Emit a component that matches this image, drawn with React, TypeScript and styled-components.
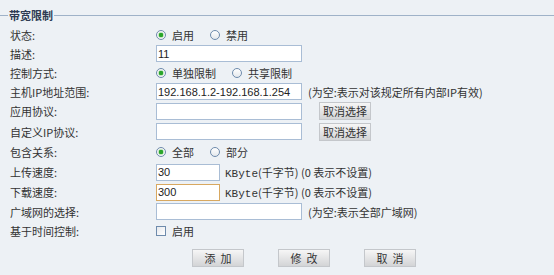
import styled, { createGlobalStyle } from "styled-components";

const GlobalStyle = createGlobalStyle`
  html, body {
    margin: 0;
    padding: 0;
    background: #edf1f5;
  }
  body {
    font-family: "Noto Sans CJK SC", "Liberation Sans", sans-serif;
    font-size: 11px;
    color: #333;
  }
`;

const Panel = styled.div`
  width: 554px;
  height: 275px;
  background: #edf1f5;
  box-sizing: border-box;
  padding-left: 10px;
`;

const Legend = styled.div`
  display: flex;
  align-items: center;
  height: 22px;
  padding-top: 4px;
  margin-left: -10px;

  &::before,
  &::after {
    content: "";
    height: 1px;
    background: #9fb2c8;
  }
  &::before {
    width: 8px;
  }
  &::after {
    flex: 1;
  }
`;

const LegendText = styled.span`
  font-weight: bold;
  color: #2e3b52;
  padding: 0 1px;
`;

const Row = styled.div<{ $h: number }>`
  display: flex;
  align-items: center;
  height: ${(p) => p.$h}px;
`;

const Label = styled.div`
  width: 146px;
  flex-shrink: 0;
`;

const Field = styled.div`
  display: flex;
  align-items: center;
`;

const Input = styled.input<{ $w?: number; $focus?: boolean }>`
  box-sizing: border-box;
  width: ${(p) => p.$w ?? 146}px;
  height: 17px;
  margin: 0;
  padding: 0 1px;
  border: 1px solid ${(p) => (p.$focus ? "#d8a860" : "#a9bdd5")};
  background: #fff;
  font-family: "Liberation Sans", Arial, sans-serif;
  font-size: 11px;
  color: #222;
  outline: none;
`;

const Hint = styled.span<{ $gap: number }>`
  margin-left: ${(p) => p.$gap}px;
  white-space: pre;
`;

const Unit = styled.span`
  font-family: "Liberation Mono", monospace;
  font-size: 11px;
`;

const Options = styled.div`
  display: flex;
  align-items: center;
  gap: 16px;
`;

const Option = styled.label`
  display: flex;
  align-items: center;
  gap: 6px;
`;

const Radio = styled.span<{ $on?: boolean }>`
  box-sizing: border-box;
  width: 10px;
  height: 10px;
  border-radius: 50%;
  border: 1px solid #6e8bac;
  background: ${(p) =>
    p.$on
      ? "radial-gradient(circle, #2aa52a 0 2px, #bfe5bf 2.5px, #f4f4f4 3.5px)"
      : "linear-gradient(#ffffff, #e4e8ec)"};
`;

const Check = styled.span`
  box-sizing: border-box;
  width: 10px;
  height: 10px;
  border: 1px solid #6e8bac;
  background: linear-gradient(135deg, #e6e9ed, #ffffff);
`;

const Button = styled.button<{ $w?: number }>`
  box-sizing: border-box;
  width: ${(p) => p.$w ?? 52}px;
  height: 18px;
  margin: 0;
  padding: 0;
  border: 1px solid #c4c7cb;
  background: linear-gradient(#f6f6f6, #d3d4d6);
  font-family: "Noto Sans CJK SC", sans-serif;
  font-size: 11px;
  color: #333;
  white-space: pre;
`;

const Actions = styled.div`
  display: flex;
  gap: 34px;
  margin: 9px 0 0 182px;
`;

const radioRow = (opts: string[]) => (
  <Options>
    {opts.map((o, i) => (
      <Option key={o}>
        <Radio $on={i === 0} />
        {o}
      </Option>
    ))}
  </Options>
);

export default function App() {
  return (
    <Panel>
      <GlobalStyle />
      <Legend>
        <LegendText>带宽限制</LegendText>
      </Legend>
      <Row $h={18}>
        <Label>状态:</Label>
        {radioRow(["启用", "禁用"])}
      </Row>
      <Row $h={19}>
        <Label>描述:</Label>
        <Input defaultValue="11" />
      </Row>
      <Row $h={19}>
        <Label>控制方式:</Label>
        {radioRow(["单独限制", "共享限制"])}
      </Row>
      <Row $h={19}>
        <Label>主机IP地址范围:</Label>
        <Field>
          <Input defaultValue="192.168.1.2-192.168.1.254" />
          <Hint $gap={6}>(为空:表示对该规定所有内部IP有效)</Hint>
        </Field>
      </Row>
      <Row $h={20}>
        <Label>应用协议:</Label>
        <Field>
          <Input />
          <Hint $gap={17}>
            <Button $w={52}>取消选择</Button>
          </Hint>
        </Field>
      </Row>
      <Row $h={21}>
        <Label>自定义IP协议:</Label>
        <Field>
          <Input />
          <Hint $gap={17}>
            <Button $w={52}>取消选择</Button>
          </Hint>
        </Field>
      </Row>
      <Row $h={20}>
        <Label>包含关系:</Label>
        {radioRow(["全部", "部分"])}
      </Row>
      <Row $h={20}>
        <Label>上传速度:</Label>
        <Field>
          <Input $w={64} defaultValue="30" />
          <Hint $gap={5}>
            <Unit>KByte</Unit>(千字节) (0 表示不设置)
          </Hint>
        </Field>
      </Row>
      <Row $h={20}>
        <Label>下载速度:</Label>
        <Field>
          <Input $w={64} $focus defaultValue="300" />
          <Hint $gap={5}>
            <Unit>KByte</Unit>(千字节) (0 表示不设置)
          </Hint>
        </Field>
      </Row>
      <Row $h={19}>
        <Label>广域网的选择:</Label>
        <Field>
          <Input />
          <Hint $gap={6}>(为空:表示全部广域网)</Hint>
        </Field>
      </Row>
      <Row $h={19}>
        <Label>基于时间控制:</Label>
        <Option>
          <Check />
          启用
        </Option>
      </Row>
      <Actions>
        <Button>{"添  加"}</Button>
        <Button>{"修  改"}</Button>
        <Button>{"取  消"}</Button>
      </Actions>
    </Panel>
  );
}
